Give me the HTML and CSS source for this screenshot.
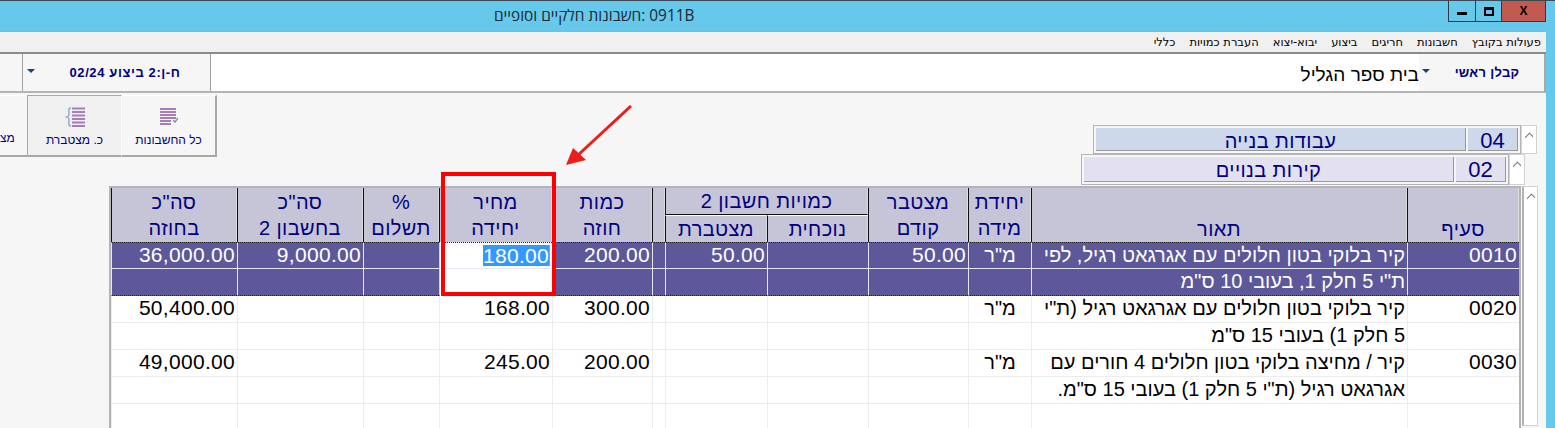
FILE: index.html
```html
<!DOCTYPE html>
<html lang="he">
<head>
<meta charset="utf-8">
<title>0911B</title>
<link rel="stylesheet" href="styles.css">
</head>
<body>
<div class="window">
  <header class="titlebar">
    <span class="title" dir="rtl">0911B :חשבונות חלקיים וסופיים</span>
    <div class="controls">
      <span class="ctl ctl-min"><i></i></span>
      <span class="ctl ctl-max"><i></i></span>
      <span class="ctl ctl-close">X</span>
    </div>
  </header>
  <div class="client">
    <nav class="menubar" dir="rtl">
      <span>פעולות בקובץ</span><span>חשבונות</span><span>חריגים</span><span>ביצוע</span><span>יבוא-יצוא</span><span>העברת כמויות</span><span>כללי</span>
    </nav>
    <div class="strip">
      <div class="strip-stub"></div>
      <div class="strip-period"><i class="tri"></i><b dir="rtl">ח-ן:2 ביצוע 02/24</b></div>
      <div class="strip-name" dir="rtl">בית ספר הגליל</div>
      <div class="strip-label"><i class="tri"></i><b dir="rtl">קבלן ראשי</b></div>
    </div>
    <div class="upper">
      <div class="toolbar">
        <div class="tb tb-cut"><span dir="rtl">מצ</span></div>
        <div class="tb tb-active">
          <svg class="ico" width="24" height="20" viewBox="0 0 24 20"><path d="M8 1C5 1 6 3 6 6S6 9 3.500 10C6 11 6 11 6 14S5 19 8 19" fill="none" stroke="#8ba3c0" stroke-width="1.300"/><path d="M9 1.500h13M9 5h13M9 8.500h13M9 12h13M9 15.500h13M9 19h13" stroke="#a67fb8" stroke-width="2" fill="none"/></svg>
          <span dir="rtl">כ. מצטברת</span>
        </div>
        <div class="tb">
          <svg class="ico" width="20" height="20" viewBox="0 0 20 20"><path d="M1 2h16M1 5h16M1 8h16M1 11h16M1 14h11M1 17h11" stroke="#a67fb8" stroke-width="2" fill="none"/><path d="M14 13l2 2 3-4" stroke="#7d9cb8" stroke-width="1.500" fill="none"/></svg>
          <span dir="rtl">כל החשבונות</span>
        </div>
      </div>
      <div class="sections">
        <div class="sec sec-a">
          <div class="sec-box"><span class="sec-name" dir="rtl">עבודות בנייה</span><span class="sec-code">04</span></div>
          <div class="vbar"><i class="chev"></i></div>
        </div>
        <div class="sec sec-b">
          <div class="sec-box"><span class="sec-name" dir="rtl">קירות בנויים</span><span class="sec-code">02</span></div>
          <div class="vbar"><i class="chev"></i></div>
        </div>
      </div>
    </div>
    <div class="lower">
      <table class="grid" dir="rtl">
        <colgroup>
          <col class="c112"><col class="c376"><col class="c63"><col class="c100"><col class="c101"><col class="c102"><col class="c13"><col class="c100"><col class="c113"><col class="c76"><col class="c126"><col class="c126">
        </colgroup>
        <thead>
          <tr>
            <th rowspan="2" class="bottom">סעיף</th>
            <th rowspan="2" class="bottom">תאור</th>
            <th rowspan="2">יחידת<br>מידה</th>
            <th rowspan="2">מצטבר<br>קודם</th>
            <th colspan="2" class="group">כמויות חשבון 2</th>
            <th rowspan="2"></th>
            <th rowspan="2">כמות<br>חוזה</th>
            <th rowspan="2">מחיר<br>יחידה</th>
            <th rowspan="2">%<br>תשלום</th>
            <th rowspan="2">סה"כ<br>בחשבון 2</th>
            <th rowspan="2">סה"כ<br>בחוזה</th>
          </tr>
          <tr><th>נוכחית</th><th>מצטברת</th></tr>
        </thead>
        <tbody>
          <tr class="sel">
            <td>0010</td><td class="he">קיר בלוקי בטון חלולים עם אגרגאט רגיל, לפי</td><td class="he mid">מ"ר</td><td>50.00</td><td></td><td>50.00</td><td></td><td>200.00</td>
            <td class="edit"><span class="picked">180.00</span></td><td></td><td>9,000.00</td><td>36,000.00</td>
          </tr>
          <tr class="sel sel-end">
            <td></td><td class="he">ת"י 5 חלק 1, בעובי 10 ס"מ</td><td></td><td></td><td></td><td></td><td></td><td></td><td class="edit"></td><td></td><td></td><td></td>
          </tr>
          <tr>
            <td>0020</td><td class="he">קיר בלוקי בטון חלולים עם אגרגאט רגיל (ת"י</td><td class="he mid">מ"ר</td><td></td><td></td><td></td><td></td><td>300.00</td><td>168.00</td><td></td><td></td><td>50,400.00</td>
          </tr>
          <tr>
            <td></td><td class="he">5 חלק 1) בעובי 15 ס"מ</td><td></td><td></td><td></td><td></td><td></td><td></td><td></td><td></td><td></td><td></td>
          </tr>
          <tr>
            <td>0030</td><td class="he">קיר / מחיצה בלוקי בטון חלולים 4 חורים עם</td><td class="he mid">מ"ר</td><td></td><td></td><td></td><td></td><td>200.00</td><td>245.00</td><td></td><td></td><td>49,000.00</td>
          </tr>
          <tr>
            <td></td><td class="he">אגרגאט רגיל (ת"י 5 חלק 1) בעובי 15 ס"מ.</td><td></td><td></td><td></td><td></td><td></td><td></td><td></td><td></td><td></td><td></td>
          </tr>
          <tr>
            <td></td><td></td><td></td><td></td><td></td><td></td><td></td><td></td><td></td><td></td><td></td><td></td>
          </tr>
        </tbody>
      </table>
      <div class="vbar vbar-main"><i class="chev"></i></div>
    </div>
    <div class="callout"></div>
    <svg class="arrow" width="80" height="72" viewBox="0 0 80 72"><path d="M71 1L17 51" stroke="#ee1c1c" stroke-width="3" fill="none"/><path d="M6 60L13 43L26 55Z" fill="#ee1c1c"/></svg>
  </div>
</div>
</body>
</html>
```
FILE: styles.css
```css
* { box-sizing: border-box; }
html, body { margin: 0; height: 100%; overflow: hidden; }
body { background: #66c9ec; font-family: "Liberation Sans", "DejaVu Sans", sans-serif; }
.window { width: 1555px; height: 428px; display: flex; flex-direction: column; overflow: hidden; }

.titlebar { height: 31px; flex: none; display: flex; align-items: flex-start; border-top: 1px solid #3c4a55; padding: 0 9px 0 494px; }
.title { font: 15.4px/30px "Open Sans", "Liberation Sans", sans-serif; color: #1b2733; }
.controls { margin-left: auto; display: flex; height: 21px; border: 1px solid #2b3a45; border-top: 0; }
.ctl { display: flex; align-items: center; justify-content: center; height: 20px; }
.ctl-min { width: 27px; border-right: 1px solid #2b3a45; }
.ctl-min i { width: 10px; height: 3px; background: #000; margin-top: 5px; }
.ctl-max { width: 26px; border-right: 1px solid #2b3a45; }
.ctl-max i { width: 10px; height: 9px; border: 2px solid #000; border-top-width: 3px; }
.ctl-close { width: 43px; background: #c35a50; font: bold 12px "Liberation Sans", sans-serif; color: #000; }

.client { position: relative; width: 1546px; flex: 1; min-height: 0; background: #f6f6f6; border-top: 1px solid #8fb3cc; overflow: hidden; }

.menubar { height: 22px; background: #f0f0f0; border-bottom: 2px solid #8a8a8a; display: flex; gap: 14px; padding: 0 5px; align-items: center; font: 11.5px "DejaVu Sans", sans-serif; color: #000; }

.strip { height: 39px; display: flex; background: #f6f6f6; border-bottom: 2px solid #b5b5b5; border-right: 2px solid #a8a8a8; }
.strip-stub { width: 23px; border-right: 1px solid #a0a0a0; }
.strip-period { width: 188px; border-right: 1px solid #a0a0a0; display: flex; align-items: center; padding: 0 4px; font-size: 13px; color: #000080; }
.strip-period b { flex: 1; text-align: center; padding-left: 9px; letter-spacing: 0.6px; }
.strip-name { flex: 1; background: #fff; font-size: 19px; line-height: 41px; color: #000; text-align: right; }
.strip-label { width: 125px; display: flex; align-items: center; padding-left: 3px; font-size: 13px; color: #000080; }
.strip-label b { flex: 1; text-align: center; letter-spacing: 0.3px; }
.tri { width: 0; height: 0; border: 4px solid transparent; border-top: 4px solid #17427a; border-bottom: 0; margin-top: -4px; flex: none; }

.upper { display: flex; justify-content: space-between; height: 93px; }
.toolbar { display: flex; height: 63px; margin-top: 2px; }
.tb { width: 95px; height: 62px; display: flex; flex-direction: column; align-items: center; border-right: 2px solid #a8a8a8; border-bottom: 2px solid #a8a8a8; border-top: 1px solid #fff; color: #000080; font-size: 12px; padding-top: 11px; background: #f6f6f6; }
.tb span { margin-top: 6px; line-height: 14px; }
.tb .ico { flex: none; }
.tb-cut { width: 27px; padding: 0; justify-content: flex-end; align-items: flex-start; overflow: hidden; border-right: 0; }
.tb-cut span { margin: 0 0 10px 0; }
.tb-active { background: #f0f0f0; border: 1px solid #a8a8a8; border-right: 1px solid #fff; border-bottom: 2px solid #a8a8a8; padding-top: 11px; }

.sections { width: 465px; padding: 32px 9px 0 0; display: flex; flex-direction: column; align-items: flex-end; }
.sec { display: flex; }
.sec-a { height: 29px; }
.sec-b { height: 31px; margin-right: 12px; }
.sec-box { width: 428px; display: flex; gap: 2px; padding: 2px; background: #f6f6f6; border: 1px solid #b4b4b4; color: #000080; font-size: 20px; }
.sec-name { flex: 1; text-align: center; line-height: 26px; border-right: 1px solid #999; border-bottom: 1px solid #999; letter-spacing: 0.4px; }
.sec-code { width: 50px; text-align: center; line-height: 26px; font-size: 22px; border-right: 1px solid #999; border-bottom: 1px solid #999; }
.sec-a .sec-name, .sec-a .sec-code { background: #cdd8ea; }
.sec-b .sec-name, .sec-b .sec-code { background: #e3e1ef; }
.vbar { width: 16px; background: #fff; border: 1px solid #d2d2d2; position: relative; }
.chev { position: absolute; left: 3px; top: 5px; width: 8px; height: 8px; overflow: hidden; }
.chev::before { content: ""; display: block; width: 6px; height: 6px; margin: 3px 0 0 1px; border-left: 1px solid #777; border-top: 1px solid #777; transform: rotate(45deg); }

.lower { display: flex; margin-left: 109px; align-items: flex-start; height: 260px; }
.grid { width: 1412px; table-layout: fixed; border-collapse: separate; border-spacing: 0; border: 2px solid #b4b4b4; border-bottom: 0; font-size: 20px; background: #fff; }
.c112 { width: 112px; } .c376 { width: 376px; } .c63 { width: 63px; } .c100 { width: 100px; } .c101 { width: 101px; } .c102 { width: 102px; } .c13 { width: 13px; } .c113 { width: 113px; } .c76 { width: 76px; } .c126 { width: 126px; }

.grid th { height: 26px; background: #c6c5d7; color: #000080; font-weight: normal; line-height: 26px; padding: 0; border-left: 1px solid #111; border-right: 1px solid #dcdcdc; text-align: center; vertical-align: middle; letter-spacing: 0.4px; }
.grid th.bottom { vertical-align: bottom; }
.grid th.group { border-bottom: 1px solid #111; }
.grid thead tr:last-child th { height: 27px; border-top: 1px solid #fff; }

.grid td { height: 27px; padding: 0 2px; font-size: 21px; line-height: 24px; vertical-align: top; white-space: nowrap; text-align: right; color: #000; border-left: 1px solid #ececec; border-bottom: 1px solid #ececec; letter-spacing: 0.3px; }
.grid td.he { font-size: 20px; letter-spacing: 0; }
.grid td.mid { text-align: center; }
.grid .sel td { background: #5c5899; color: #fff; border-color: #e6e6f0; }
.grid .sel:first-child td { border-top: 1px dotted #222; }
.grid .sel-end td { border-bottom: 1px dotted #222; }
.grid .sel td.edit { background: #fff; color: #fff; border-left-color: #cfcfd8; }
.picked { background: #3399ff; display: inline-block; line-height: 21px; border-right: 1px solid #e8893a; margin-top: 2px; }

.vbar-main { height: 240px; margin-left: 1px; flex: none; border-left: 2px solid #b4b4b4; }

.callout { position: absolute; left: 441px; top: 140px; width: 115px; height: 124px; border: 4px solid #f00; }
.arrow { position: absolute; left: 560px; top: 73px; }
```
